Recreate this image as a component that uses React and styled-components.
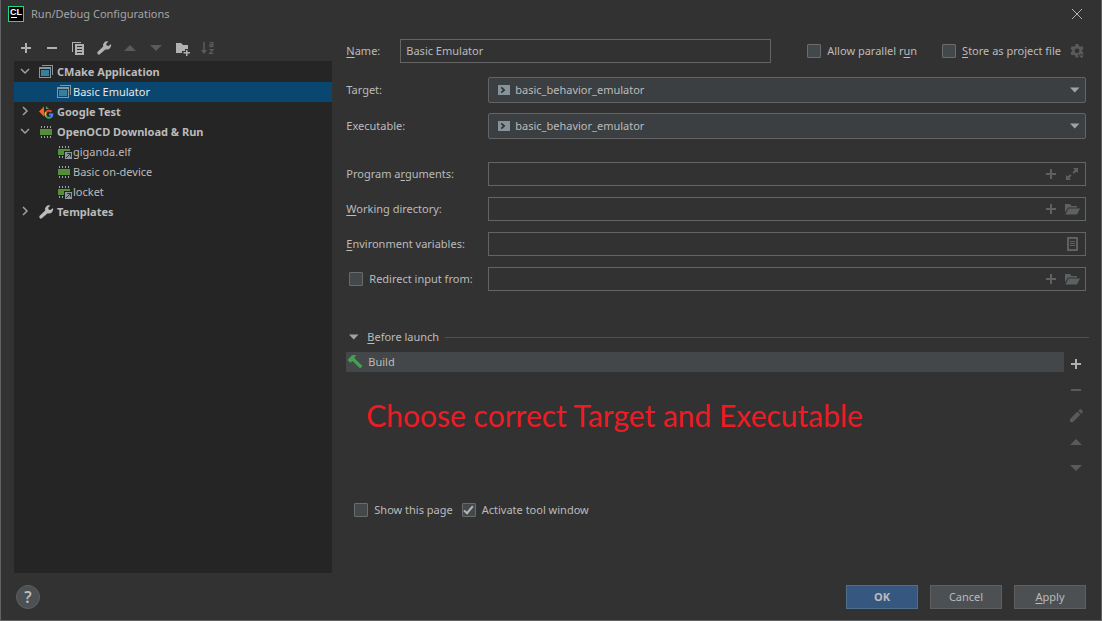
import React, { useState } from "react";
import styled, { createGlobalStyle, css } from "styled-components";

const GlobalStyle = createGlobalStyle`
  *, *::before, *::after { box-sizing: border-box; }
  body {
    margin: 0;
    background: #323232;
    color: #bbbbbb;
    font: 11px/16px "Noto Sans", "Open Sans", sans-serif;
  }
  button, input, select { font: inherit; color: inherit; }
  u { text-underline-offset: 2px; text-decoration-skip-ink: none; }
`;

/* ---------- icons ---------- */

const Svg = styled.svg`
  display: block;
  flex: none;
  width: 16px;
  height: 16px;
`;

const Icon = ({ children, ...rest }) => (
  <Svg viewBox="0 0 16 16" fill="currentColor" aria-hidden="true" {...rest}>
    {children}
  </Svg>
);

const ClionIcon = () => (
  <Icon>
    <rect width="16" height="16" fill="#21d789" />
    <rect x="1" y="1" width="14" height="14" fill="#000" />
    <text x="2" y="9" fill="#fff" fontSize="9" fontWeight="700" fontFamily="Liberation Sans, sans-serif">CL</text>
    <rect x="3" y="11" width="6" height="1" fill="#fff" />
  </Icon>
);
const CloseIcon = () => (
  <Icon fill="none" stroke="currentColor">
    <path d="M3 3l10 10M13 3L3 13" />
  </Icon>
);
const PlusIcon = () => (
  <Icon shapeRendering="crispEdges">
    <path d="M7 3h2v4h4v2H9v4H7V9H3V7h4z" />
  </Icon>
);
const MinusIcon = () => (
  <Icon shapeRendering="crispEdges">
    <path d="M3 7h10v2H3z" />
  </Icon>
);
const CopyIcon = () => (
  <Icon shapeRendering="crispEdges">
    <path d="M2 2h9v1H3v9H2z" />
    <path fillRule="evenodd" d="M5 4h9v11H5zM7 6v1h5V6zM7 9v1h5V9zM7 12v1h5v-1z" />
  </Icon>
);
const WrenchIcon = () => (
  <Icon>
    <path d="M15 4.100l-2.400 2-2-.5-.4-1.900 2.200-2.300a4.100 4.100 0 0 0-5.200 5.200L1.700 11.800a1.700 1.700 0 0 0 0 2.300 1.700 1.700 0 0 0 2.400 0l5.600-4.900a4.100 4.100 0 0 0 5.300-5.100z" />
  </Icon>
);
const UpIcon = () => (
  <Icon>
    <path d="M2 11l6-6 6 6z" />
  </Icon>
);
const DownIcon = () => (
  <Icon>
    <path d="M2 5h12l-6 6z" />
  </Icon>
);
const NewFolderIcon = () => (
  <Icon>
    <path d="M2 3h5l2 2h5v4h-3v2H8v2H2z" />
    <path d="M12 10h1.500v2H16v1.500h-2.500V16H12v-2.500H9.500V12H12z" />
  </Icon>
);
const SortIcon = () => (
  <Icon>
    <path d="M3.200 2h1.600v8H7l-3 4-3-4h2.200z" />
    <path fill="none" stroke="currentColor" strokeWidth="1.300" d="M9.500 2.600h3.300V7M12.600 4.600H10v1.900h2.800M9.500 9.600h3.500L9.700 13.400h3.600" />
  </Icon>
);
const ChevronIcon = ({ open }) => (
  <Icon fill="none" stroke="#a0a0a0" strokeWidth="1.500">
    <path d={open ? "M4 5l4 4 4-4" : "M6 3l4 4-4 4"} />
  </Icon>
);
const CMakeIcon = () => (
  <Icon shapeRendering="crispEdges">
    <path fill="#8a969e" d="M4 1h11v10h-1V2H4z" />
    <path fill="#8a969e" fillRule="evenodd" d="M1 3h12v11H1zM2 5v8h10V5z" />
    <path fill="#35809f" d="M3 6h8v6H3z" />
  </Icon>
);
const GoogleTestIcon = () => (
  <Icon>
    <path fill="#f26522" d="M1 7.500L6 2.500v10z" />
    <path fill="#499c54" d="M8 2l3 3H8z" />
    <g fill="none" strokeWidth="2">
      <path stroke="#ea4335" d="M13.500 7.800A3.600 3.600 0 0 0 7.700 8.700" />
      <path stroke="#fbbc05" d="M7.900 8.300A3.600 3.600 0 0 0 7.900 12.300" />
      <path stroke="#34a853" d="M7.700 11.800A3.600 3.600 0 0 0 13.200 13" />
      <path stroke="#4285f4" d="M10.900 10.600h3.400a3.600 3.600 0 0 1-1.300 2.600" />
    </g>
  </Icon>
);
const ChipIcon = ({ linked }) => (
  <Icon shapeRendering="crispEdges">
    <path fill="#548e38" d="M2 5h12v6H2z" />
    <path fill="#9aa7b0" d="M3 2h1v2H3zM6 2h1v2H6zM9 2h1v2H9zM12 2h1v2h-1zM3 12h1v2H3zM6 12h1v2H6zM9 12h1v2H9zM12 12h1v2h-1z" />
    {linked && (
      <>
        <path fill="#252525" d="M8 7h8v8H8z" />
        <path fill="#8c979f" d="M9 8h7v7H9z" />
        <path fill="#30383c" d="M11 9h4v4h-1v-2h-1v1h-1v1h-1v1h-1v-1h1v-1h1v-1h1v-1h-2z" />
      </>
    )}
  </Icon>
);
const TerminalIcon = () => (
  <Icon>
    <path fill="#87939a" d="M2 3h12v10H2z" />
    <path fill="none" stroke="#323638" strokeWidth="1.700" d="M5.200 5.300l3 2.700-3 2.700" />
  </Icon>
);
const ComboArrow = () => (
  <Icon>
    <path fill="#a0a3a5" d="M3 5.500h9.500L7.750 10.500z" />
  </Icon>
);
const GearIcon = () => (
  <Icon>
    <path fillRule="evenodd" d="M6.500 1h3l.4 2 1.300.7 1.900-.7 1.500 2.600L13 7v1.500l1.600 1.300-1.500 2.600-1.900-.7-1.300.7-.4 2h-3l-.4-2-1.300-.7-1.900.7-1.500-2.600L3 8.500V7L1.400 5.600 2.900 3l1.900.7L6.100 3zM8 5.400a2.400 2.400 0 1 0 0 4.800 2.400 2.400 0 0 0 0-4.800z" />
    <path stroke="#323232" d="M9 12h7l-3.500 3.500z" />
  </Icon>
);
const ExpandIcon = () => (
  <Icon>
    <path d="M9 2h5v5l-1.600-1.600-2.600 2.400-1.300-1.300 2.200-2.700zM2 14V9l1.600 1.600 2.600-2.400 1.300 1.300-2.200 2.700L7 14z" />
  </Icon>
);
const FolderIcon = () => (
  <Icon>
    <path d="M1 3h5l1.500 2H13v1.500H4L1 11.500z" />
    <path d="M4.600 7.500H16L13 13.500H1.300z" />
  </Icon>
);
const ListIcon = () => (
  <Icon shapeRendering="crispEdges">
    <path fillRule="evenodd" d="M3 1h11v14H3zM5 3v10h7V3z" />
    <path d="M6 5h5v1H6zM6 7h5v1H6zM6 9h5v1H6z" />
  </Icon>
);
const HammerIcon = () => (
  <Icon fill="#499c54">
    <path d="M0.500 6L5 1.300 9.500 1 7.600 3l.3 1.700L15.500 12l-2.300 2.500L5.500 7 3.400 8.700z" />
  </Icon>
);
const PencilIcon = () => (
  <Icon>
    <path d="M2 11l7.500-7.500 3 3L5 14H2zM10.300 2.700l1.200-1.200a1.200 1.200 0 0 1 1.700 0l1.300 1.300a1.200 1.200 0 0 1 0 1.700l-1.200 1.200z" />
  </Icon>
);

/* ---------- window ---------- */

const Dialog = styled.div`
  display: flex;
  flex-direction: column;
  min-height: 100vh;
  border: solid #606263;
  border-width: 0 1px 1px;
`;

const TitleBar = styled.header`
  display: flex;
  align-items: center;
  gap: 7px;
  height: 28px;
  padding: 0 16px 0 7px;
`;

const Title = styled.h1`
  flex: 1;
  margin: 0;
  font-size: 11px;
  font-weight: 400;
  color: #a5a5a5;
`;

const IconButton = styled.button`
  display: flex;
  align-items: center;
  justify-content: center;
  flex: none;
  width: ${(p) => p.$size || 24}px;
  height: ${(p) => p.$size || 24}px;
  padding: 0;
  border: 0;
  background: none;
  color: ${(p) => p.$color || "#afb1b3"};
`;

const Main = styled.main`
  flex: 1;
  display: grid;
  grid-template-columns: 3fr 7fr;
  column-gap: 14px;
  padding: 0 12px 0 13px;
`;

/* ---------- configuration tree ---------- */

const Sidebar = styled.aside`
  display: flex;
  flex-direction: column;
`;

const Toolbar = styled.div`
  display: flex;
  align-items: flex-end;
  gap: 2px;
  height: 33px;
  padding-bottom: 1px;
`;

const Tree = styled.ul`
  flex: 1;
  margin: 0;
  padding: 1px 0;
  list-style: none;
  background: #252525;
`;

const Branch = styled.ul`
  margin: 0;
  padding: 0;
  list-style: none;
`;

const TreeRow = styled.div`
  display: flex;
  align-items: center;
  height: 20px;
  white-space: nowrap;
  ${(p) =>
    p.$leaf
      ? css`padding-left: 42px; gap: 1px;`
      : css`padding-left: 3px; gap: 3px; font-weight: 700;`}
  ${(p) => p.$selected && css`background: #0a4770; color: #e8e8e8;`}
`;

const ChevronSlot = styled.span`
  margin-right: 2px;
`;

/* ---------- form ---------- */

const Form = styled.form`
  display: flex;
  flex-direction: column;
  min-width: 0;
  padding-top: 11px;
`;

const NameRow = styled.div`
  display: flex;
  align-items: center;
  padding-right: 4px;
`;

const NameLabel = styled.label`
  width: 54px;
`;

const Options = styled.div`
  display: flex;
  align-items: center;
  gap: ${(p) => p.$gap}px;
`;

const FieldGroup = styled.div`
  display: grid;
  grid-template-columns: 142px 1fr;
  align-items: center;
  row-gap: ${(p) => p.$gap}px;
  margin-top: ${(p) => p.$top}px;
  padding-right: 3px;
`;

const TextBox = styled.div`
  display: flex;
  align-items: center;
  gap: 5px;
  flex: 1;
  height: 24px;
  padding: 0 5px;
  border: 1px solid #646464;
  color: #5c6164;
`;

const Input = styled.input`
  flex: 1;
  min-width: 0;
  padding: 0;
  border: 0;
  outline: 0;
  background: none;
  color: #bbbbbb;
`;

const Combo = styled.div`
  display: flex;
  align-items: center;
  gap: 3px;
  height: 26px;
  padding: 0 2px 0 7px;
  border: 1px solid #646464;
  border-radius: 2px;
  background: #3c3f41;
`;

const Select = styled.select`
  flex: 1;
  min-width: 0;
  padding: 0;
  border: 0;
  outline: 0;
  appearance: none;
  background: none;
`;

const CheckLabel = styled.label`
  display: flex;
  align-items: center;
  gap: 6px;
  white-space: nowrap;
`;

const CheckBox = styled.input.attrs({ type: "checkbox" })`
  display: grid;
  place-items: center;
  flex: none;
  width: 14px;
  height: 14px;
  margin: 0;
  appearance: none;
  border: 1px solid #6b6b6b;
  border-radius: 1px;
  background: #43494a;

  &:checked::after {
    content: "";
    width: 5px;
    height: 10px;
    margin-bottom: 3px;
    border: solid #b4b6b7;
    border-width: 0 2px 2px 0;
    transform: rotate(40deg);
  }
`;

const Check = ({ children, checked = false }) => {
  const [on, setOn] = useState(checked);
  return (
    <CheckLabel>
      <CheckBox checked={on} onChange={(e) => setOn(e.target.checked)} />
      <span>{children}</span>
    </CheckLabel>
  );
};

const Indent = styled.div`
  padding-left: ${(p) => p.$left}px;
`;

/* ---------- before launch ---------- */

const SectionHeader = styled.div`
  display: flex;
  align-items: center;
  gap: 6px;
  height: 20px;
  margin-top: 36px;

  &::after {
    content: "";
    flex: 1;
    height: 1px;
    background: #515151;
  }
`;

const SectionToggle = styled.button`
  display: flex;
  align-items: center;
  gap: 5px;
  padding: 0;
  border: 0;
  background: none;
`;

const Launch = styled.div`
  display: flex;
  margin: 5px 0 22px;
  padding-right: 1px;
`;

const Tasks = styled.div`
  flex: 1;
`;

const Task = styled.div`
  display: flex;
  align-items: center;
  gap: 5px;
  height: 20px;
  padding-left: 1px;
  background: #434749;
`;

const Note = styled.p`
  margin: 23px 0 0;
  padding-left: 20px;
  font: 30px/40px Lato, sans-serif;
  color: #ed1c24;
`;

const TaskTools = styled.div`
  display: flex;
  flex-direction: column;
  gap: 2px;
`;

/* ---------- footer ---------- */

const Footer = styled.footer`
  display: flex;
  align-items: center;
  gap: 12px;
  padding: 12px 15px 11px;
`;

const HelpButton = styled.button`
  width: 24px;
  height: 24px;
  margin-right: auto;
  padding: 0;
  border: 1px solid #5e6060;
  border-radius: 50%;
  background: #4c5052;
  font-size: 16px;
  font-weight: 600;
  line-height: 20px;
`;

const Button = styled.button`
  width: 72px;
  height: 24px;
  padding: 0;
  border: 1px solid ${(p) => (p.$primary ? "#4c708c" : "#5e6060")};
  background: ${(p) => (p.$primary ? "#365880" : "#4c5052")};
  font-weight: ${(p) => (p.$primary ? 700 : 400)};
`;

const DIM = "#5a5a5a";

const tools = [
  { label: "Add", icon: PlusIcon },
  { label: "Remove", icon: MinusIcon },
  { label: "Copy", icon: CopyIcon },
  { label: "Edit templates", icon: WrenchIcon },
  { label: "Move up", icon: UpIcon, color: DIM },
  { label: "Move down", icon: DownIcon, color: DIM },
  { label: "New folder", icon: NewFolderIcon },
  { label: "Sort", icon: SortIcon, color: DIM },
];

const taskTools = [
  { label: "Add task", icon: PlusIcon },
  { label: "Remove task", icon: MinusIcon, color: DIM },
  { label: "Edit task", icon: PencilIcon, color: DIM },
  { label: "Move task up", icon: UpIcon, color: DIM },
  { label: "Move task down", icon: DownIcon, color: DIM },
];

const tree = [
  {
    name: "CMake Application",
    icon: <CMakeIcon />,
    open: true,
    items: [{ name: "Basic Emulator", icon: <CMakeIcon />, selected: true }],
  },
  { name: "Google Test", icon: <GoogleTestIcon /> },
  {
    name: "OpenOCD Download & Run",
    icon: <ChipIcon />,
    open: true,
    items: [
      { name: "giganda.elf", icon: <ChipIcon linked /> },
      { name: "Basic on-device", icon: <ChipIcon /> },
      { name: "locket", icon: <ChipIcon linked /> },
    ],
  },
  { name: "Templates", icon: <WrenchIcon /> },
];

const IconButtons = ({ items }) =>
  items.map(({ label, icon: Glyph, color }) => (
    <IconButton key={label} type="button" aria-label={label} $color={color}>
      <Glyph />
    </IconButton>
  ));

const ConfigTree = () => (
  <Tree role="tree">
    {tree.map((group) => (
      <li key={group.name} role="treeitem" aria-expanded={!!group.open}>
        <TreeRow>
          <ChevronSlot><ChevronIcon open={group.open} /></ChevronSlot>
          {group.icon}
          <span>{group.name}</span>
        </TreeRow>
        {group.items && (
          <Branch role="group">
            {group.items.map((item) => (
              <li key={item.name} role="treeitem" aria-selected={!!item.selected}>
                <TreeRow $leaf $selected={item.selected}>
                  {item.icon}
                  <span>{item.name}</span>
                </TreeRow>
              </li>
            ))}
          </Branch>
        )}
      </li>
    ))}
  </Tree>
);

const TargetSelect = ({ id }) => (
  <Combo>
    <TerminalIcon />
    <Select id={id}>
      <option>basic_behavior_emulator</option>
    </Select>
    <ComboArrow />
  </Combo>
);

const PathField = ({ actions, ...input }) => (
  <TextBox>
    <Input type="text" {...input} />
    {actions.map(([label, Glyph]) => (
      <IconButton key={label} type="button" aria-label={label} $size={16} $color="#5c6164">
        <Glyph />
      </IconButton>
    ))}
  </TextBox>
);

export default function App() {
  return (
    <Dialog>
      <GlobalStyle />
      <TitleBar>
        <ClionIcon />
        <Title>Run/Debug Configurations</Title>
        <IconButton type="button" aria-label="Close" $size={16}>
          <CloseIcon />
        </IconButton>
      </TitleBar>

      <Main>
        <Sidebar>
          <Toolbar>
            <IconButtons items={tools} />
          </Toolbar>
          <ConfigTree />
        </Sidebar>

        <Form onSubmit={(e) => e.preventDefault()}>
          <NameRow>
            <NameLabel htmlFor="name"><u>N</u>ame:</NameLabel>
            <TextBox>
              <Input id="name" type="text" defaultValue="Basic Emulator" />
            </TextBox>
            <Indent $left={36}>
              <Options $gap={25}>
                <Check>Allow parallel r<u>u</u>n</Check>
                <Options $gap={8}>
                  <Check><u>S</u>tore as project file</Check>
                  <IconButton type="button" aria-label="Storage options" $size={16} $color={DIM}>
                    <GearIcon />
                  </IconButton>
                </Options>
              </Options>
            </Indent>
          </NameRow>

          <FieldGroup $top={14} $gap={10}>
            <label htmlFor="target">Target:</label>
            <TargetSelect id="target" />
            <label htmlFor="executable">Executable:</label>
            <TargetSelect id="executable" />
          </FieldGroup>

          <FieldGroup $top={23} $gap={11}>
            <label htmlFor="args">Program a<u>r</u>guments:</label>
            <PathField id="args" actions={[["Insert macro", PlusIcon], ["Expand", ExpandIcon]]} />
            <label htmlFor="dir"><u>W</u>orking directory:</label>
            <PathField id="dir" actions={[["Insert macro", PlusIcon], ["Browse", FolderIcon]]} />
            <label htmlFor="env"><u>E</u>nvironment variables:</label>
            <PathField id="env" actions={[["Edit variables", ListIcon]]} />
            <Indent $left={3}>
              <Check>Redirect input from:</Check>
            </Indent>
            <PathField aria-label="Redirect input from" actions={[["Insert macro", PlusIcon], ["Browse", FolderIcon]]} />
          </FieldGroup>

          <SectionHeader>
            <SectionToggle type="button" aria-expanded="true">
              <ComboArrow />
              <span><u>B</u>efore launch</span>
            </SectionToggle>
          </SectionHeader>
          <Launch>
            <Tasks>
              <Task>
                <HammerIcon />
                <span>Build</span>
              </Task>
              <Note>Choose correct Target and Executable</Note>
            </Tasks>
            <TaskTools>
              <IconButtons items={taskTools} />
            </TaskTools>
          </Launch>

          <Indent $left={8}>
            <Options $gap={9}>
              <Check>Show this page</Check>
              <Check checked>Activate tool window</Check>
            </Options>
          </Indent>
        </Form>
      </Main>

      <Footer>
        <HelpButton type="button" aria-label="Help">?</HelpButton>
        <Button type="button" $primary>OK</Button>
        <Button type="button">Cancel</Button>
        <Button type="button"><u>A</u>pply</Button>
      </Footer>
    </Dialog>
  );
}
